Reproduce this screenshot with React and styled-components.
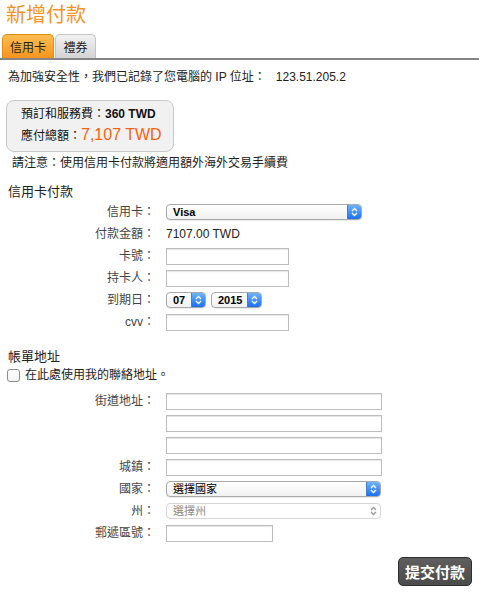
import React from "react";
import styled, { createGlobalStyle } from "styled-components";

const Global = createGlobalStyle`
  html, body { margin: 0; padding: 0; background: #fff; }
  body { font-family: "Liberation Sans", "Noto Sans CJK TC", sans-serif; color: #222; font-size: 12px; }
`;

const Page = styled.div`
  width: 479px;
  display: flex;
  flex-direction: column;
`;

const Title = styled.h1`
  margin: 3px 0 0 6px;
  font-size: 20px;
  line-height: 24px;
  font-weight: normal;
  color: #f7921e;
`;

const TabBar = styled.div`
  margin-top: 7px;
  display: flex;
  gap: 1px;
  padding-left: 2px;
  border-bottom: 2px solid #858585;
`;

const Tab = styled.div`
  height: 24px;
  box-sizing: border-box;
  width: ${(p) => p.$w}px;
  display: flex;
  align-items: center;
  justify-content: center;
  font-size: 12px;
  color: #222;
  border-radius: 5px 5px 0 0;
  border: 1px solid ${(p) => (p.$active ? "#e48a16" : "#c4c4c4")};
  border-bottom: none;
  background: ${(p) =>
    p.$active
      ? "linear-gradient(#fdbd52, #f7941d)"
      : "linear-gradient(#f2f2f2, #d4d4d4)"};
`;

const Body = styled.div`
  display: flex;
  flex-direction: column;
  padding-left: 8px;
`;

const Info = styled.div`
  margin-top: 9px;
  line-height: 16px;
  color: #222;
`;

const Ip = styled.span`
  margin-left: 10px;
`;

const Summary = styled.div`
  margin: 15px 0 0 -2px;
  width: 168px;
  box-sizing: border-box;
  border: 1px solid #c8c8c8;
  border-radius: 8px;
  background: #f1f1f1;
  padding: 4px 0 3px 14px;
  display: flex;
  flex-direction: column;
`;

const FeeLine = styled.div`
  line-height: 18px;
  color: #111;
`;

const Strong = styled.b`
  font-weight: bold;
`;

const TotalLine = styled.div`
  line-height: 24px;
  display: flex;
  align-items: baseline;
  color: #111;
`;

const TotalAmount = styled.span`
  font-size: 16px;
  color: #f7630c;
`;

const Note = styled.div`
  margin: 3px 0 0 4px;
  line-height: 16px;
  color: #222;
`;

const Heading = styled.div`
  margin-top: ${(p) => p.$mt}px;
  font-size: 13px;
  line-height: 18px;
  color: #222;
`;

const Form = styled.div`
  display: flex;
  flex-direction: column;
  margin-top: ${(p) => p.$mt || 0}px;
`;

const Row = styled.div`
  height: 22px;
  display: grid;
  grid-template-columns: 147px auto;
  column-gap: 11px;
  align-items: center;
`;

const Label = styled.div`
  text-align: right;
  color: #444;
  font-size: 12px;
  line-height: 16px;
`;

const Value = styled.div`
  display: flex;
  align-items: center;
  gap: 5px;
  color: #222;
  font-size: 12px;
`;

const TextInput = styled.div`
  width: ${(p) => p.$w}px;
  height: 17px;
  box-sizing: border-box;
  border: 1px solid #bdbdbd;
  box-shadow: inset 0 1px 1px #e6e6e6;
  background: #fff;
`;

const SelectBox = styled.div`
  width: ${(p) => p.$w}px;
  height: 16px;
  box-sizing: border-box;
  border: 1px solid ${(p) => (p.$disabled ? "#d6d6d6" : "#a9a9a9")};
  border-radius: 4px;
  background: ${(p) => (p.$disabled ? "#fff" : "linear-gradient(#ffffff, #f1f1f1)")};
  display: flex;
  align-items: center;
  overflow: hidden;
  box-shadow: ${(p) => (p.$disabled ? "none" : "0 1px 1px rgba(0,0,0,0.08)")};
`;

const SelectText = styled.span`
  flex: 1;
  padding-left: 6px;
  font-size: 11px;
  line-height: 14px;
  color: ${(p) => (p.$disabled ? "#8a8a8a" : "#000")};
  font-weight: ${(p) => (p.$bold ? "bold" : "normal")};
`;

const Stepper = styled.span`
  width: 13px;
  height: 100%;
  display: flex;
  align-items: center;
  justify-content: center;
  background: ${(p) => (p.$disabled ? "transparent" : "linear-gradient(#6db4fb, #1a6ff0)")};
  border-left: ${(p) => (p.$disabled ? "none" : "1px solid #3d7fd9")};
`;

const Chevrons = ({ color }) => (
  <svg width="7" height="10" viewBox="0 0 7 10">
    <path d="M1 4 L3.5 1.5 L6 4" fill="none" stroke={color} strokeWidth="1.3" />
    <path d="M1 6 L3.5 8.5 L6 6" fill="none" stroke={color} strokeWidth="1.3" />
  </svg>
);

const Select = ({ w, text, disabled, bold }) => (
  <SelectBox $w={w} $disabled={disabled}>
    <SelectText $disabled={disabled} $bold={bold}>{text}</SelectText>
    <Stepper $disabled={disabled}>
      <Chevrons color={disabled ? "#999" : "#fff"} />
    </Stepper>
  </SelectBox>
);

const CheckRow = styled.label`
  display: flex;
  align-items: center;
  gap: 5px;
  line-height: 18px;
  margin-left: -1px;
  color: #222;
`;

const CheckBox = styled.span`
  width: 11px;
  height: 11px;
  border: 1px solid #8c8c8c;
  border-radius: 3px;
  background: linear-gradient(#fff, #f3f3f3);
`;

const Actions = styled.div`
  margin-top: 13px;
  display: flex;
  justify-content: flex-end;
  padding-right: 7px;
`;

const Submit = styled.button`
  height: 29px;
  padding: 0 5px;
  border: 1px solid #2e2e2e;
  border-radius: 5px;
  background: linear-gradient(#5e5e5e, #4b4b4b);
  color: #fff;
  font-family: "Noto Sans CJK TC", sans-serif;
  font-size: 15px;
  font-weight: bold;
  line-height: 27px;
  width: 74px;
`;

export default function App() {
  return (
    <Page>
      <Global />
      <Title>新增付款</Title>
      <TabBar>
        <Tab $active $w={52}>信用卡</Tab>
        <Tab $w={41}>禮券</Tab>
      </TabBar>
      <Body>
        <Info>
          為加強安全性，我們已記錄了您電腦的 IP 位址：<Ip>123.51.205.2</Ip>
        </Info>
        <Summary>
          <FeeLine>
            預訂和服務費：<Strong>360 TWD</Strong>
          </FeeLine>
          <TotalLine>
            應付總額：<TotalAmount>7,107 TWD</TotalAmount>
          </TotalLine>
        </Summary>
        <Note>請注意：使用信用卡付款將適用額外海外交易手續費</Note>
        <Heading $mt={12}>信用卡付款</Heading>
        <Form>
          <Row>
            <Label>信用卡：</Label>
            <Value><Select w={196} text="Visa" bold /></Value>
          </Row>
          <Row>
            <Label>付款金額：</Label>
            <Value>7107.00 TWD</Value>
          </Row>
          <Row>
            <Label>卡號：</Label>
            <Value><TextInput $w={123} /></Value>
          </Row>
          <Row>
            <Label>持卡人：</Label>
            <Value><TextInput $w={123} /></Value>
          </Row>
          <Row>
            <Label>到期日：</Label>
            <Value>
              <Select w={40} text="07" bold />
              <Select w={51} text="2015" bold />
            </Value>
          </Row>
          <Row>
            <Label>cvv：</Label>
            <Value><TextInput $w={123} /></Value>
          </Row>
        </Form>
        <Heading $mt={15}>帳單地址</Heading>
        <CheckRow>
          <CheckBox />
          在此處使用我的聯絡地址。
        </CheckRow>
        <Form $mt={6}>
          <Row>
            <Label>街道地址：</Label>
            <Value><TextInput $w={216} /></Value>
          </Row>
          <Row>
            <Label />
            <Value><TextInput $w={216} /></Value>
          </Row>
          <Row>
            <Label />
            <Value><TextInput $w={216} /></Value>
          </Row>
          <Row>
            <Label>城鎮：</Label>
            <Value><TextInput $w={216} /></Value>
          </Row>
          <Row>
            <Label>國家：</Label>
            <Value><Select w={215} text="選擇國家" /></Value>
          </Row>
          <Row>
            <Label>州：</Label>
            <Value><Select w={215} text="選擇州" disabled /></Value>
          </Row>
          <Row>
            <Label>郵遞區號：</Label>
            <Value><TextInput $w={107} /></Value>
          </Row>
        </Form>
        <Actions>
          <Submit>提交付款</Submit>
        </Actions>
      </Body>
    </Page>
  );
}
